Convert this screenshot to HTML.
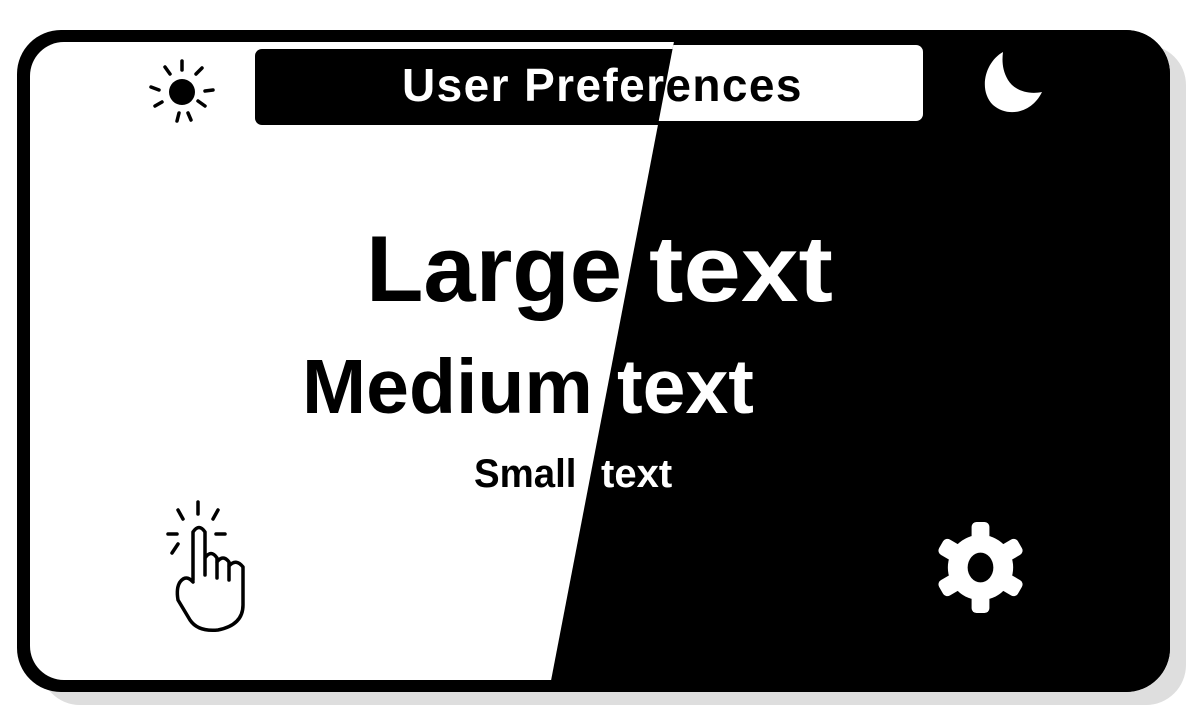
<!DOCTYPE html>
<html><head><style>
html,body{margin:0;padding:0;background:#fff;width:1200px;height:717px;overflow:hidden;font-family:"Liberation Sans",Arial,sans-serif;font-weight:bold}
.shadow{position:absolute;left:40px;top:45px;width:1146px;height:660px;background:#dedede;border-radius:40px}
.frame{position:absolute;left:17px;top:30px;width:1153px;height:662px;background:#000;border-radius:44px}
.layer{position:absolute;left:0;top:0;width:1200px;height:717px}
.light .inner{position:absolute;left:30px;top:42px;width:1130px;height:638px;background:#fff;border-radius:34px}
.dark{clip-path:polygon(682px 0,1200px 0,1200px 717px,544px 717px)}
.dark .inner{position:absolute;left:17px;top:30px;width:1153px;height:662px;background:#000;border-radius:44px}
.t{position:absolute;white-space:nowrap;line-height:1;transform-origin:0 0}
.bar{position:absolute;left:255px;width:668px;height:76px;border-radius:7px}
.light .bar{background:#000;top:49px}.dark .bar{background:#fff;top:45px}
.light .t{color:#000}.dark .t{color:#fff}
.light .bar .t{color:#fff}.dark .bar .t{color:#000}
</style></head><body>
<div class="shadow"></div>
<div class="frame"></div>
<div class="layer light">
 <div class="inner"></div>
 <div class="bar"><div class="t" style="left:147px;top:13px;font-size:46px;letter-spacing:1.4px">User Preferences</div></div>
 <div class="t" style="left:366px;top:222px;font-size:94px">Large</div>
 <div class="t" style="left:302px;top:349px;font-size:77px">Medium</div>
 <div class="t" style="left:474px;top:454px;font-size:40px;transform:scaleX(0.96)">Small</div>
 <svg style="position:absolute;left:145px;top:55px" width="75" height="75" viewBox="0 0 75 75">
  <circle cx="37" cy="37" r="13" fill="#000"/>
  <g stroke="#000" stroke-width="3.5" stroke-linecap="round">
   <line x1="37" y1="6" x2="37" y2="15"/><line x1="34" y1="58" x2="32" y2="66"/><line x1="43" y1="58" x2="46" y2="65"/>
   <line x1="6" y1="32" x2="14" y2="35"/><line x1="60" y1="36" x2="68" y2="35"/>
   <line x1="20" y1="12" x2="25" y2="19"/><line x1="53" y1="46" x2="60" y2="51"/>
   <line x1="57" y1="13" x2="51" y2="19"/><line x1="10" y1="51" x2="17" y2="47"/>
  </g>
 </svg>
 <svg style="position:absolute;left:160px;top:500px" width="95" height="135" viewBox="0 0 95 135">
  <g fill="none" stroke="#000" stroke-width="3.5" stroke-linecap="round" stroke-linejoin="round">
   <line x1="38" y1="2" x2="38" y2="14"/><line x1="18" y1="10" x2="23" y2="19"/><line x1="58" y1="10" x2="53" y2="19"/>
   <line x1="8" y1="34" x2="17" y2="34"/><line x1="56" y1="34" x2="65" y2="34"/><line x1="12" y1="53" x2="18" y2="44"/>
   <path d="M33 80 V32 q6-9 12 0 V75 M45 58 q6-9 12 0 V78 M57 62 q6-8 12 0 V80 M69 66 q7-8 14 1 V105 q0 20-25 25 q-20 2-28-10 L18 100 q-2-12 2-18 q6-8 13 0"/>
  </g>
 </svg>
</div>
<div class="layer dark">
 <div class="inner"></div>
 <div class="bar"><div class="t" style="left:147px;top:17px;font-size:46px;letter-spacing:1.4px">User Preferences</div></div>
 <div class="t" style="left:649px;top:222px;font-size:94px;transform:scaleX(1.1)">text</div>
 <div class="t" style="left:617px;top:349px;font-size:77px">text</div>
 <div class="t" style="left:601px;top:454px;font-size:40px">text</div>
 <svg style="position:absolute;left:978px;top:50px" width="70" height="70" viewBox="0 0 70 70">
  <path d="M25 2 C7 12 0 40 15 55 C30 68 54 63 64 42 C50 45 36 40 30 30 C24 20 24 10 25 2 Z" fill="#fff"/>
 </svg>
 <svg style="position:absolute;left:933px;top:520px" width="95" height="95" viewBox="-48 -48 96 96">
  <g fill="#fff">
   <circle r="33"/>
   <g id="tt"><rect x="-9" y="-46" width="18" height="20" rx="5"/></g>
   <use href="#tt" transform="rotate(60)"/><use href="#tt" transform="rotate(120)"/>
   <use href="#tt" transform="rotate(180)"/><use href="#tt" transform="rotate(240)"/><use href="#tt" transform="rotate(300)"/>
  </g>
  <ellipse rx="13" ry="15" fill="#000"/>
 </svg>
</div>
</body></html>
